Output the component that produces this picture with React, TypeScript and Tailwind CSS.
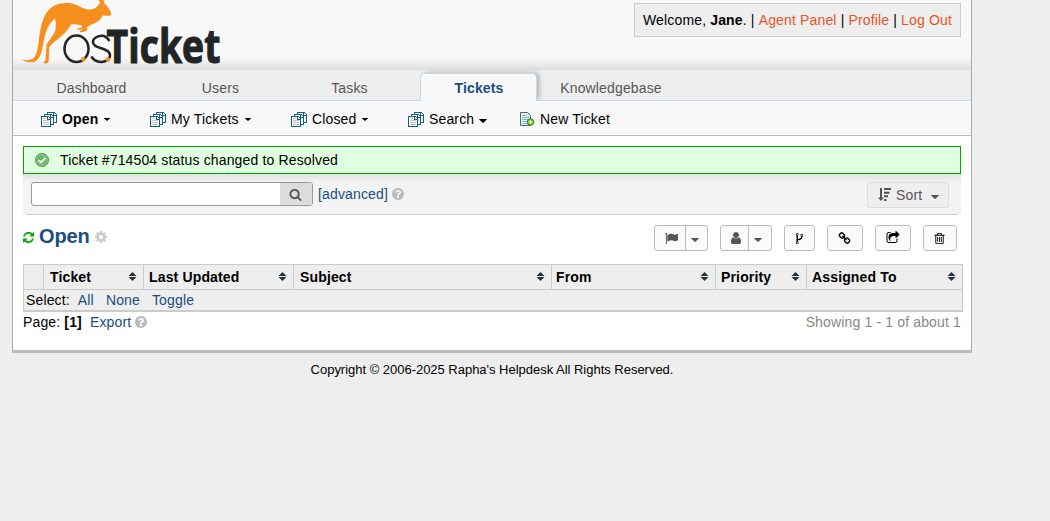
import React from "react";

const paths = {
  search:
    "M1216 832q0-185-131.5-316.5t-316.5-131.5-316.5 131.5-131.5 316.5 131.5 316.5 316.5 131.5 316.5-131.5 131.5-316.5zm512 832q0 52-38 90t-90 38q-54 0-90-38l-343-342q-179 124-399 124-143 0-273.5-55.5t-225-150-150-225-55.5-273.5 55.5-273.5 150-225 225-150 273.5-55.5 273.5 55.5 225 150 150 225 55.5 273.5q0 220-124 399l343 343q37 37 37 90z",
  help: "M1024 1376v-192q0-14-9-23t-23-9h-192q-14 0-23 9t-9 23v192q0 14 9 23t23 9h192q14 0 23-9t9-23zm256-672q0-88-55.5-163t-138.5-116-170-41q-243 0-371 213-15 24 8 42l132 100q7 6 19 6 16 0 25-12 53-68 86-92 34-24 86-24 48 0 85.5 26t37.5 59q0 38-20 61t-68 45q-63 28-115.5 86.5t-52.5 125.5v36q0 14 9 23t23 9h192q14 0 23-9t9-23q0-19 21.5-49.5t54.5-49.5q32-18 49-28.5t46-35 44.5-48 28-60.5 12.5-81zm384 192q0 209-103 385.5t-279.5 279.5-385.5 103-385.5-103-279.5-279.5-103-385.5 103-385.5 279.5-279.5 385.5-103 385.5 103 279.5 279.5 103 385.5z",
  refresh:
    "M1639 1056q0 5-1 7-64 268-268 434.5t-478 166.5q-146 0-282.5-55t-243.5-157l-129 129q-19 19-45 19t-45-19-19-45v-448q0-26 19-45t45-19h448q26 0 45 19t19 45-19 45l-137 137q71 66 161 102t187 36q134 0 250-65t186-179q11-17 53-117 8-23 30-23h192q13 0 22.5 9.5t9.5 22.5zm25-800v448q0 26-19 45t-45 19h-448q-26 0-45-19t-19-45 19-45l138-138q-148-137-349-137-134 0-250 65t-186 179q-11 17-53 117-8 23-30 23h-199q-13 0-22.5-9.5t-9.5-22.5v-7q65-268 270-434.5t480-166.5q146 0 284 55.5t245 156.5l130-129q19-19 45-19t45 19 19 45z",
  cog: "M1152 896q0-106-75-181t-181-75-181 75-75 181 75 181 181 75 181-75 75-181zm512-109v222q0 12-8 23t-20 13l-185 28q-19 54-39 91 35 50 107 138 10 12 10 25t-9 23q-27 37-99 108t-94 71q-12 0-26-9l-138-108q-44 23-91 38-16 136-29 186-7 28-36 28h-222q-14 0-24.5-8.5t-11.5-21.5l-28-184q-49-16-90-37l-141 107q-10 9-25 9-14 0-25-11-126-114-165-168-7-10-7-23 0-12 8-23 15-21 51-66.5t54-70.5q-27-50-41-99l-183-27q-13-2-21-12.5t-8-23.5v-222q0-12 8-23t19-13l186-28q14-46 39-92-40-57-107-138-10-12-10-24 0-10 9-23 26-36 98.5-107.5t94.5-71.5q13 0 26 10l138 107q44-23 91-38 16-136 29-186 7-28 36-28h222q14 0 24.5 8.5t11.5 21.5l28 184q49 16 90 37l142-107q9-9 24-9 13 0 25 10 129 119 165 170 7 8 7 22 0 12-8 23-15 21-51 66.5t-54 70.5q26 50 41 98l183 28q13 2 21 12.5t8 23.5z",
  trash:
    "M704 736v576q0 14-9 23t-23 9h-64q-14 0-23-9t-9-23v-576q0-14 9-23t23-9h64q14 0 23 9t9 23zm256 0v576q0 14-9 23t-23 9h-64q-14 0-23-9t-9-23v-576q0-14 9-23t23-9h64q14 0 23 9t9 23zm256 0v576q0 14-9 23t-23 9h-64q-14 0-23-9t-9-23v-576q0-14 9-23t23-9h64q14 0 23 9t9 23zm128 724v-948h-896v948q0 22 7 40.5t14.5 27 10.5 8.5h832q3 0 10.5-8.5t14.5-27 7-40.5zm-672-1076h448l-48-117q-7-9-17-11h-317q-10 2-17 11zm928 32v64q0 14-9 23t-23 9h-96v948q0 83-47 143.5t-113 60.5h-832q-66 0-113-58.5t-47-141.5v-952h-96q-14 0-23-9t-9-23v-64q0-14 9-23t23-9h309l70-167q15-37 54-63t79-26h320q40 0 79 26t54 63l70 167h309q14 0 23 9t9 23z",
  share:
    "M1472 989v259q0 119-84.5 203.5t-203.5 84.5h-832q-119 0-203.5-84.5t-84.5-203.5v-832q0-119 84.5-203.5t203.5-84.5h255q13 0 22.5 9.5t9.5 22.5q0 27-26 32-77 26-133 60-10 4-16 4h-112q-66 0-113 47t-47 113v832q0 66 47 113t113 47h832q66 0 113-47t47-113v-214q0-19 18-29 28-13 54-37 16-16 35-8 21 9 21 29zm237-496l-384 384q-18 19-45 19-12 0-25-5-39-17-39-59v-192h-160q-323 0-438 131-119 137-74 473 3 23-20 34-8 2-12 2-16 0-26-13-10-14-21-31t-39.5-68.5-49.5-99.5-38.5-114-17.5-122q0-49 3.5-91t14-90 28-88 47-81.5 68.5-74 94.5-61.5 124.5-48.5 159.5-30.5 196.5-11h160v-192q0-42 39-59 13-5 25-5 26 0 45 19l384 384q19 19 19 45t-19 45z",
  fork: "M672 1472q0-40-28-68t-68-28-68 28-28 68 28 68 68 28 68-28 28-68zm0-1152q0-40-28-68t-68-28-68 28-28 68 28 68 68 28 68-28 28-68zm640 128q0-40-28-68t-68-28-68 28-28 68 28 68 68 28 68-28 28-68zm96 0q0 52-26 96.5t-70 69.5q-2 287-226 414-67 38-203 81-128 40-169.5 71t-41.5 100v26q44 25 70 69.5t26 96.5q0 80-56 136t-136 56-136-56-56-136q0-52 26-96.5t70-69.5v-820q-44-25-70-69.5t-26-96.5q0-80 56-136t136-56 136 56 56 136q0 52-26 96.5t-70 69.5v497q54-26 154-57 55-17 87.5-29.5t70.5-31 59-39.5 40.5-51 28-69.5 8.5-91.5q-44-25-70-69.5t-26-96.5q0-80 56-136t136-56 136 56 56 136z",
  link: "M1520 1216q0-40-28-68l-208-208q-28-28-68-28-42 0-72 32 3 3 19 18.5t21.5 21.5 15 19 13 25.5 3.5 27.5q0 40-28 68t-68 28q-15 0-27.5-3.5t-25.5-13-19-15-21.5-21.5-18.5-19q-33 31-33 73 0 40 28 68l206 207q27 27 68 27 40 0 68-26l147-146q28-28 28-67zm-703-705q0-40-28-68l-206-207q-28-28-68-28-39 0-68 27l-147 146q-28 28-28 67 0 40 28 68l208 208q27 27 68 27 42 0 72-31-3-3-19-18.5t-21.5-21.5-15-19-13-25.5-3.5-27.5q0-40 28-68t68-28q15 0 27.5 3.5t25.5 13 19 15 21.5 21.5 18.5 19q33-31 33-73zm895 705q0 120-85 203l-147 146q-83 83-203 83-121 0-204-85l-206-207q-83-83-83-203 0-123 88-209l-88-88q-86 88-208 88-120 0-204-84l-208-208q-84-84-84-204t85-203l147-146q83-83 203-83 121 0 204 85l206 207q83 83 83 203 0 123-88 209l88 88q86-88 208-88 120 0 204 84l208 208q84 84 84 204z",
  flag: "M320 256q0 72-64 110v1266q0 13-9.5 22.5t-22.5 9.5h-64q-13 0-22.5-9.5t-9.5-22.5v-1266q-64-38-64-110 0-53 37.5-90.5t90.5-37.5 90.5 37.5 37.5 90.5zm1472 64v763q0 25-12.5 38.5t-39.5 27.5q-215 116-369 116-61 0-123.5-22t-108.5-48-115.5-48-142.5-22q-192 0-464 146-17 9-33 9-26 0-45-19t-19-45v-742q0-32 31-55 21-14 79-43 236-120 421-120 107 0 200 29t219 88q38 19 88 19 54 0 117.5-21t110-47 88-47 54.5-21q26 0 45 19t19 45z",
  user: "M1536 1399q0 109-62.5 187t-150.5 78h-854q-88 0-150.5-78t-62.5-187q0-85 8.5-160.5t31.5-152 58.5-131 94-89 134.5-34.5q131 128 313 128t313-128q76 0 134.5 34.5t94 89 58.5 131 31.5 152 8.5 160.5zm-256-887q0 159-112.5 271.5t-271.5 112.5-271.5-112.5-112.5-271.5 112.5-271.5 271.5-112.5 271.5 112.5 112.5 271.5z",
};

function Glyph({ name, className }: { name: keyof typeof paths; className: string }) {
  return (
    <svg viewBox="0 0 1792 1792" className={`shrink-0 ${className}`} fill="currentColor">
      <path d={paths[name]} />
    </svg>
  );
}

function Caret({ className }: { className: string }) {
  return (
    <svg viewBox="0 0 8 4" preserveAspectRatio="none" className={`shrink-0 ${className}`} fill="currentColor">
      <path d="M0.4 0h7.2q0.6 0.2 0.2 0.6L4.4 3.8q-0.4 0.3-0.8 0L0.2 0.6Q-0.2 0.2 0.4 0z" />
    </svg>
  );
}

function Logo() {
  return (
    <svg width="204" height="69" viewBox="18 0 204 69" className="block overflow-visible">
      <path
        fill="#f78f1e"
        d="M22 59.3Q28 61.500 33 58.500C37 55.500 38 47 39 39C40.500 27 42.500 17 49 9.500C55 3.500 64 2 72 3.400C79 5 84 10 91 9.600C96 9 98.500 5 100.300 2.500L98 0H103.500L104.500 3.500C107.500 6.500 111 11 111.300 14.200Q111 16 108.500 15.700L102.800 15.600C101 19.500 97 23 91.500 24.500L86.500 27.500L87.800 29.500Q85.500 32 80 32.300L79.500 31L83.500 29.600L77.500 29.800L77.500 28.300L81.500 27.800L82 25.500L75 24.200L71 24.600C67 32 60 38 54 42L49.200 47L48.700 61Q48 64 44.500 63.500L43.500 62.300L45.500 60L46.500 44.500L54 33.500C56.500 29 56 22 55 18.500C48 24 45.500 32 44 40C42 51 40.500 59 35 61.500C30 63.500 24 61.500 22 59.300z"
      />
      <ellipse cx="76.500" cy="48.800" rx="12" ry="13.300" fill="none" stroke="#222526" strokeWidth="2.500" />
      <path
        d="M109.500 41C107 37 104.500 35.500 101.500 35.700C96.500 36 92.600 39 93 42.300C93.500 46 97 47 102 48.500C107 50 110 52 110 55.300C110 59.500 105.500 62 101 61.900C97 61.800 93.500 60 91.300 56.500"
        fill="none"
        stroke="#222526"
        strokeWidth="2.500"
      />
      <circle cx="83.300" cy="59.300" r="2.200" fill="#f78f1e" />
      <circle cx="108" cy="59.500" r="2.200" fill="#f78f1e" />
      <text
        x="106.500"
        y="62.500"
        textLength="114"
        lengthAdjust="spacingAndGlyphs"
        fontFamily="Open Sans, Noto Sans, sans-serif"
        fontWeight="700"
        fontSize="46.500"
        stroke="#222526"
        strokeWidth="1.200"
        fill="#222526"
      >
        Ticket
      </text>
    </svg>
  );
}

function StackIcon() {
  return (
    <svg width="16" height="15" viewBox="0 0 16 15" className="shrink-0" fill="#fff" stroke="#15607f" shapeRendering="crispEdges">
      <path d="M6.500 0.500H13.500L15.500 2.500V10.500H6.500z" />
      <path d="M12.500 1V3.500H15" fill="none" />
      <path d="M3.500 2.500H10.500L12.500 4.500V12.500H3.500z" />
      <path d="M9.500 3V5.500H12" fill="none" />
      <path d="M0.500 4.500H7.500L9.500 6.500V14.500H0.500z" />
      <path d="M6.500 5V7.500H9" fill="none" />
      <path d="M2 6.500H5M2 8.500H8M2 10.500H8M2 12.500H8" stroke="#c4c4c4" fill="none" />
    </svg>
  );
}

function NewTicketIcon() {
  return (
    <svg width="16" height="16" viewBox="0 0 16 16" className="shrink-0">
      <path d="M1.500 1.500H8.500L11.500 4.500V14.500H1.500z" fill="#eef5fa" stroke="#47657e" />
      <path d="M3 4.500H8M3 6.500H10M3 8.500H9M3 10.500H8M3 12.500H8" stroke="#7fb6cf" />
      <circle cx="11.500" cy="11" r="3.300" fill="#66b80e" stroke="#438d08" />
      <path d="M11.500 9V13M9.500 11H13.500" stroke="#f2ffd8" strokeWidth="1.300" />
    </svg>
  );
}

function SortIcon() {
  return (
    <svg width="13" height="13" viewBox="0 0 13 13" className="shrink-0" fill="#555">
      <path d="M2 0h2v9.500h2L3 13L0 9.500h2zM6 0h7v2H6zM6 3.700h5.500v2H6zM6 7.300h4v2H6zM6 11h2.500v2H6z" />
    </svg>
  );
}

const tabs = [
  { label: "Dashboard", width: "w-[129px]" },
  { label: "Users", width: "w-[129px]" },
  { label: "Tasks", width: "w-[129px]" },
  { label: "Tickets", width: "w-[129px]", active: true },
  { label: "Knowledgebase", width: "w-[136px]" },
];

const columns = [
  { label: "Ticket", width: "w-[100px]", pad: "pl-[6px]" },
  { label: "Last Updated", width: "w-[150px]", pad: "pl-[5px]" },
  { label: "Subject", width: "w-[258px]", pad: "pl-[6px]" },
  { label: "From", width: "w-[164px]", pad: "pl-[4px]" },
  { label: "Priority", width: "w-[91px]", pad: "pl-[5px]" },
  { label: "Assigned To", width: "w-[156px]", pad: "pl-[5px]" },
];

const button = "flex h-[26px] items-center rounded-[3px] border border-[#bbb] bg-[#fafafa] text-black";

function Toolbar() {
  return (
    <div className="flex h-[26px]">
      <div className={`${button} mr-3 w-[54px]`}>
        <span className="flex h-full w-[31px] items-center justify-center border-r border-[#bbb] pl-[3px]">
          <Glyph name="flag" className="size-[13px] text-[#555]" />
        </span>
        <Caret className="ml-[5px] mt-[3px] h-1 w-2 text-[#555]" />
      </div>
      <div className={`${button} mr-3 w-[52px]`}>
        <span className="flex h-full w-[28px] items-center justify-center border-r border-[#bbb] pl-[3px]">
          <Glyph name="user" className="size-[14px] text-[#555]" />
        </span>
        <Caret className="ml-[5px] mt-[3px] h-1 w-2 text-[#555]" />
      </div>
      <div className={`${button} mr-3 w-[31px] justify-center`}>
        <Glyph name="fork" className="size-[13px]" />
      </div>
      <div className={`${button} mr-3 w-[36px] justify-center pr-px`}>
        <Glyph name="link" className="size-[13px]" />
      </div>
      <div className={`${button} mr-3 w-[36px] justify-center pr-px`}>
        <Glyph name="share" className="size-[14px]" />
      </div>
      <div className={`${button} w-[34px] justify-center pr-[2px]`}>
        <Glyph name="trash" className="size-[13px]" />
      </div>
    </div>
  );
}

export default function App() {
  return (
    <div className="h-[521px] overflow-hidden bg-[#eee] font-['Liberation_Sans',Arial,sans-serif] text-[14px] leading-4 tracking-[0.15px] text-black">
      <div className="ml-3 w-[960px] border-x border-b-[3px] border-x-[#aaa] border-b-[#bbb] bg-white">
        <header className="flex h-[70px] justify-between border-b border-[#ddd] bg-[#f8f8f8] bg-[linear-gradient(to_bottom,#f8f8f8_58px,#e0e0e0_69px)] pl-[5px] pr-[10px]">
          <Logo />
          <p className="mt-[3px] flex h-[34px] w-[327px] items-center whitespace-pre border border-[#ccc] bg-[#eee] pl-2">
            <span>Welcome, </span>
            <b>Jane</b>
            <span>. | </span>
            <a className="text-[#e65524]">Agent Panel</a>
            <span> | </span>
            <a className="text-[#e65524]">Profile</a>
            <span> | </span>
            <a className="text-[#e65524]">Log Out</a>
          </p>
        </header>

        <nav className="flex h-[31px] border-b border-[#c5d9ec] bg-[#eee] pl-[14px] text-[#555]">
          {tabs.map((t) => (
            <div key={t.label} className={`flex justify-center ${t.width}`}>
              {t.active ? (
                <span className="mt-[3px] flex h-7 w-[117px] items-center justify-center rounded-t-[5px] border border-b-0 border-[#c5d9ec] bg-[#f8f8f8] pl-px font-bold text-[#184e81] shadow-[3px_-1px_5px_-1px_#aaa] [clip-path:inset(-6px_-8px_0_-6px)]">
                  {t.label}
                </span>
              ) : (
                <span className="mt-[10px]">{t.label}</span>
              )}
            </div>
          ))}
        </nav>

        <div className="flex h-[35px] items-center border-b border-[#bbb] bg-[#f8f8f8] pl-7 pt-[2px]">
          <div className="flex w-[109px] items-center">
            <StackIcon />
            <b className="ml-[5px]">Open</b>
            <Caret className="ml-[6px] h-[3px] w-[6px]" />
          </div>
          <div className="flex w-[141px] items-center">
            <StackIcon />
            <span className="ml-[5px]">My Tickets</span>
            <Caret className="ml-[6px] h-[3px] w-[6px]" />
          </div>
          <div className="flex w-[117px] items-center">
            <StackIcon />
            <span className="ml-[5px]">Closed</span>
            <Caret className="ml-[6px] h-[3px] w-[6px]" />
          </div>
          <div className="flex w-[111px] items-center">
            <StackIcon />
            <span className="ml-[5px]">Search</span>
            <Caret className="ml-[5px] mt-[3px] h-1 w-2" />
          </div>
          <div className="flex items-center">
            <NewTicketIcon />
            <span className="ml-[5px]">New Ticket</span>
          </div>
        </div>

        <main className="h-[214px] px-[10px] pt-[10px]">
          <div className="flex h-7 items-center border border-[#0a0] bg-[#e0ffe0] pl-[11px]">
            <svg width="14" height="14" viewBox="0 0 14 14" className="shrink-0">
              <circle cx="7" cy="7" r="6.500" fill="#5eae5b" stroke="#4c9a4a" />
              <circle cx="7" cy="7" r="5.300" fill="#66b663" stroke="#a5d6a2" strokeWidth="0.800" />
              <path d="M3.800 7.200L6.200 9.500L10.300 4.800" fill="none" stroke="#fff" strokeWidth="1.900" />
            </svg>
            <span className="ml-[11px]">Ticket #714504 status changed to Resolved</span>
          </div>

          <div className="flex h-[41px] w-[938px] items-start justify-between rounded-b-[5px] border-b border-dotted border-[#bbb] bg-[#f3f3f3] bg-[linear-gradient(to_bottom,#e2e2e2,#f3f3f3_9px)] pl-2 pr-3 pt-2">
            <div className="flex items-center">
              <div className="flex h-6 w-[282px] overflow-hidden rounded-[3px] border border-[#999] bg-white">
                <span className="flex-1" />
                <span className="flex w-8 items-center justify-center bg-[#ddd] pr-[2px]">
                  <Glyph name="search" className="size-[13px] text-[#555]" />
                </span>
              </div>
              <a className="ml-[5px] text-[#184e81]">[advanced]</a>
              <Glyph name="help" className="ml-[3px] size-[14px] text-[#bbb]" />
            </div>
            <div className="flex h-[26px] w-[82px] items-center rounded-[3px] border border-[#ddd] bg-[#efefef] pb-px pl-[10px] text-[#555]">
              <SortIcon />
              <span className="ml-[5px]">Sort</span>
              <Caret className="ml-[9px] mt-[4px] h-1 w-2" />
            </div>
          </div>

          <div className="flex h-[49px] items-start justify-between pr-1 pt-[10px]">
            <div className="flex h-[25px] items-center">
              <Glyph name="refresh" className="-ml-px -mt-px size-[13px] text-[#0a0]" />
              <h2 className="-mt-[3px] ml-1 text-[20px] font-bold leading-6 tracking-[-0.1px] text-[#184e81]">Open</h2>
              <Glyph name="cog" className="-mt-px ml-1 size-[14px] text-[#ccc]" />
            </div>
            <Toolbar />
          </div>

          <div className="w-[940px] border-b-2 border-l border-t border-[#ccc] bg-[#eee]">
            <div className="flex h-[25px] border-b border-[#ccc] font-bold">
              <span className="w-5 border-r border-[#ccc]" />
              {columns.map((c) => (
                <div key={c.label} className={`flex items-center justify-between border-r border-[#ccc] pr-[6px] ${c.width} ${c.pad}`}>
                  <span>{c.label}</span>
                  <svg width="9" height="9" viewBox="0 0 9 9" className="-mt-px shrink-0" fill="#263238">
                    <path d="M4.500 0L8.500 4H0.500zM4.500 9L8.500 5H0.500z" />
                  </svg>
                </div>
              ))}
            </div>
            <div className="flex h-5 items-center border-r border-[#ccc] pl-[2px]">
              <span>Select:</span>
              <a className="ml-[8px] text-[#184e81]">All</a>
              <a className="ml-[12px] text-[#184e81]">None</a>
              <a className="ml-[12px] text-[#184e81]">Toggle</a>
            </div>
          </div>

          <div className="mt-[2px] flex items-center justify-between">
            <div className="flex items-center">
              <span>Page:</span>
              <b className="ml-1">[1]</b>
              <a className="ml-2 text-[#184e81]">Export</a>
              <Glyph name="help" className="ml-[3px] size-[14px] text-[#bbb]" />
            </div>
            <span className="text-[#888]">Showing 1 - 1 of about 1</span>
          </div>
        </main>
      </div>
      <footer className="ml-3 mt-[9px] w-[960px] text-center text-[13px] leading-4 tracking-[-0.02px]">
        Copyright © 2006-2025 Rapha's Helpdesk All Rights Reserved.
      </footer>
    </div>
  );
}
